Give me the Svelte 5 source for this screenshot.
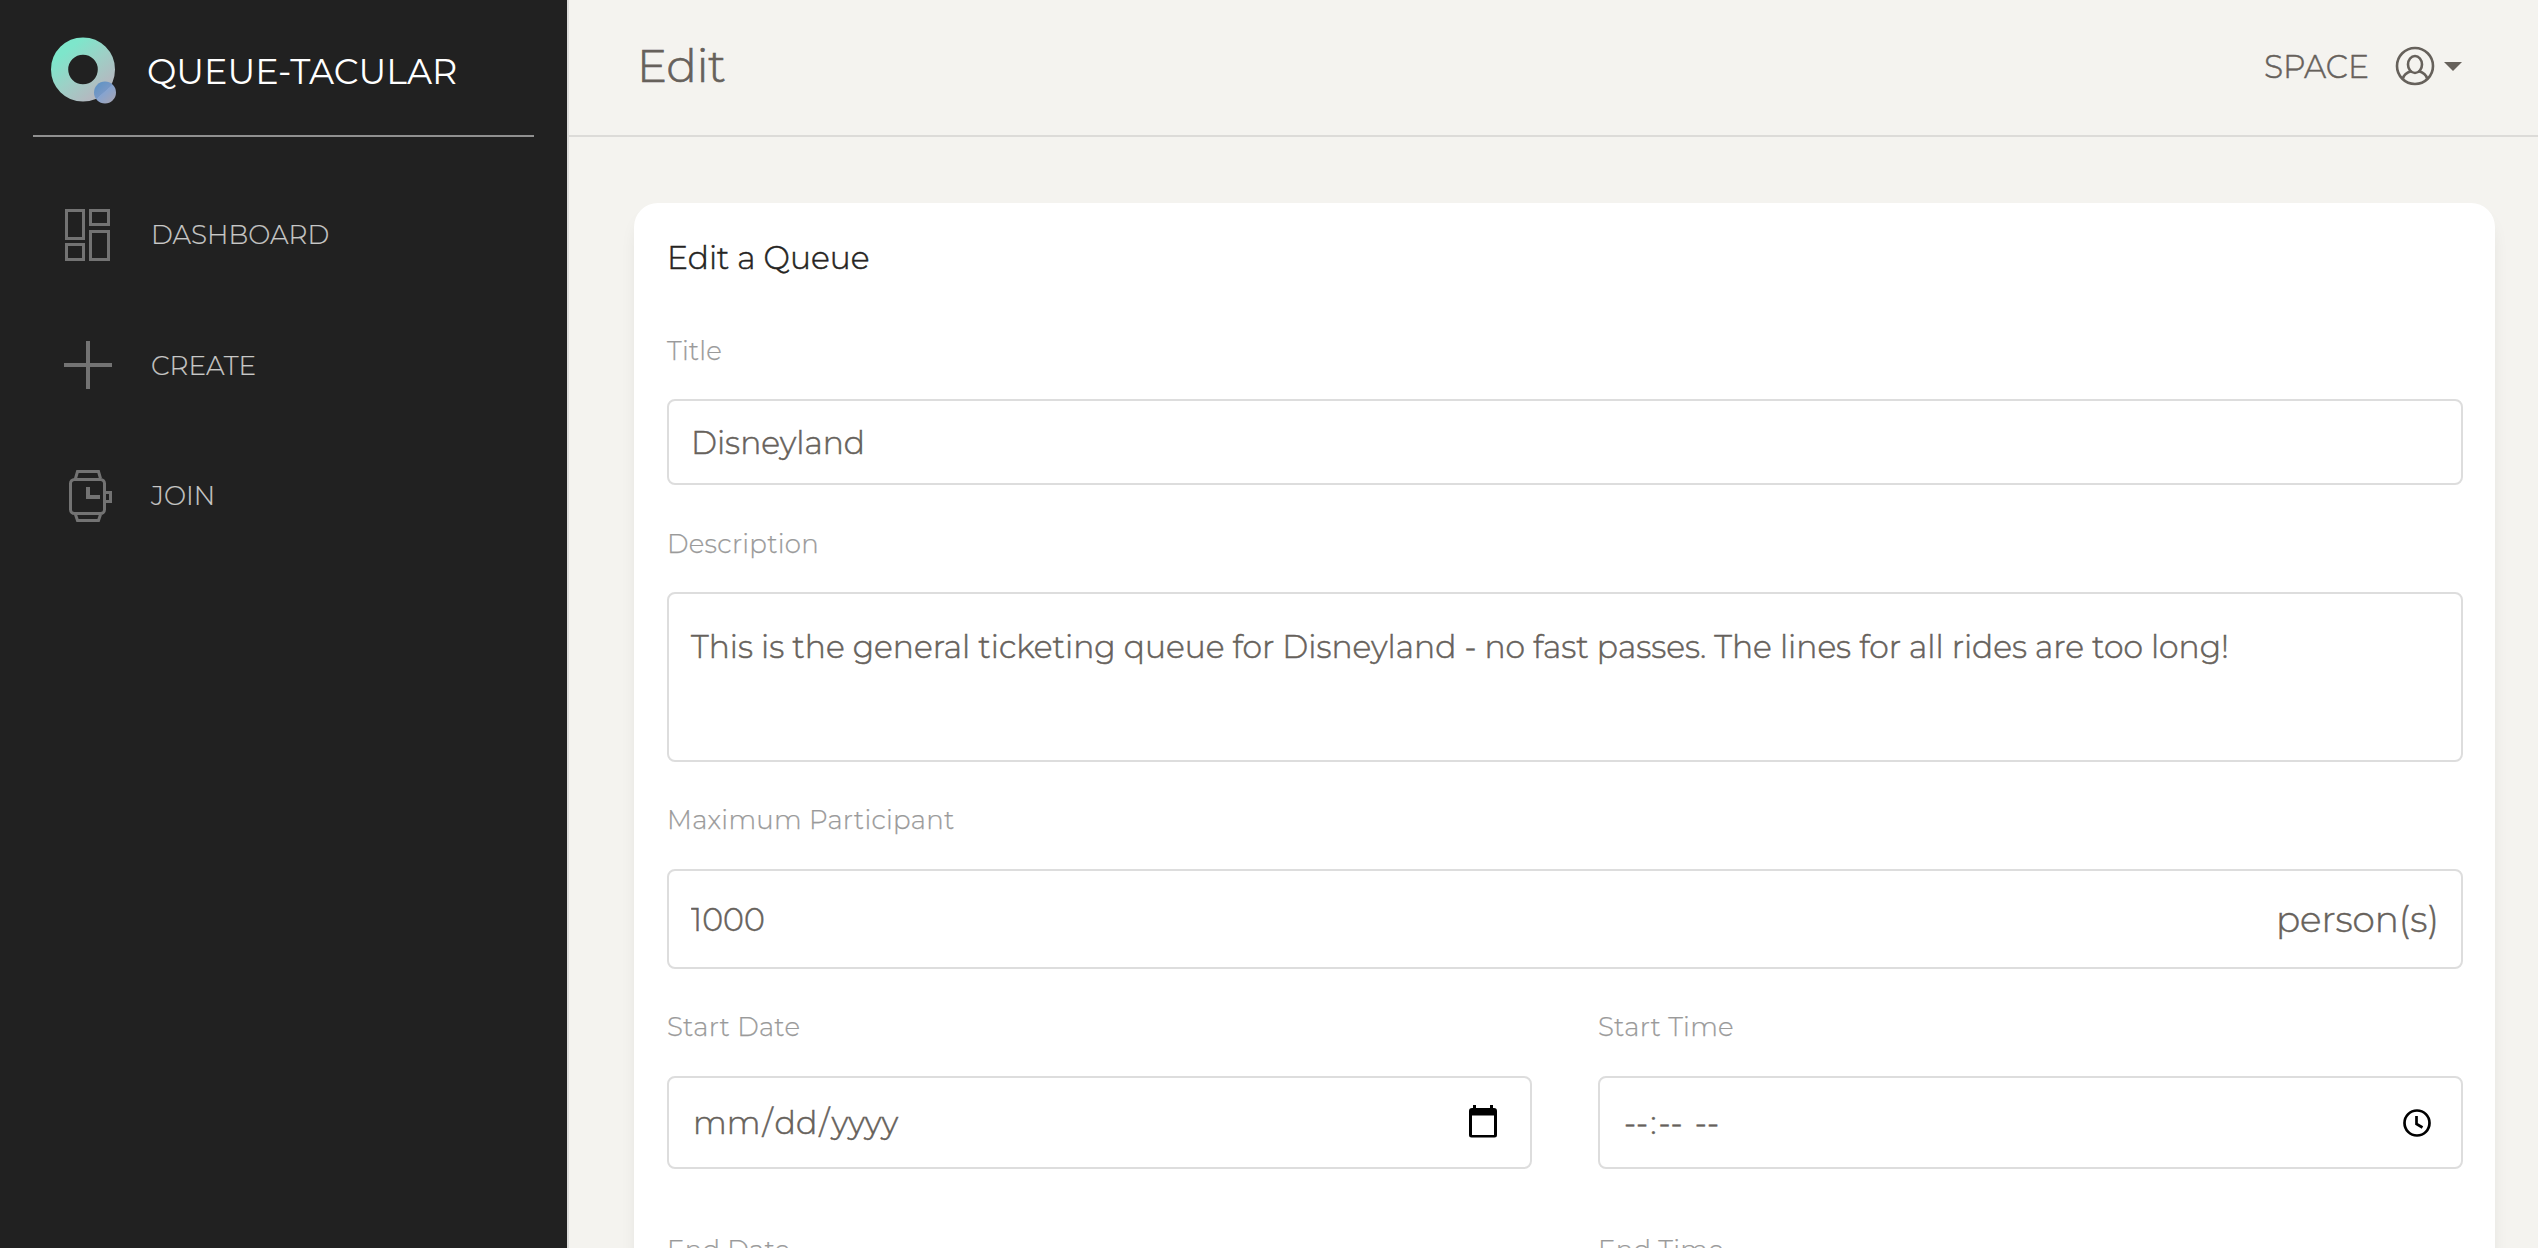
<script>
  const nav = ['DASHBOARD', 'CREATE', 'JOIN'];
  const rows = [
    ['Start Date', 'Start Time'],
    ['End Date', 'End Time'],
  ];
  let title = $state('Disneyland');
  let description = $state(
    'This is the general ticketing queue for Disneyland - no fast passes. The lines for all rides are too long!'
  );
  let maximum = $state('1000');
</script>

<div class="app">
  <aside>
    <div class="brand">
      <svg class="logo" viewBox="0 0 66 68">
        <defs>
          <linearGradient id="ring" x1="0.15" y1="0.1" x2="0.85" y2="0.95">
            <stop offset="0" stop-color="#7ee6cb" />
            <stop offset="0.5" stop-color="#9dd0c6" />
            <stop offset="1" stop-color="#b3b9c0" />
          </linearGradient>
          <linearGradient id="dot" x1="0.1" y1="0.1" x2="0.8" y2="0.9">
            <stop offset="0" stop-color="#5f93c4" />
            <stop offset="0.48" stop-color="#7798c6" />
            <stop offset="0.5" stop-color="#86a4d0" />
            <stop offset="1" stop-color="#a0a4b8" />
          </linearGradient>
        </defs>
        <circle cx="33" cy="31.500" r="23.4" fill="none" stroke="url(#ring)" stroke-width="17.2" />
        <circle cx="55" cy="54.500" r="11" fill="url(#dot)" />
      </svg>
      <span>QUEUE-TACULAR</span>
    </div>
    <nav>
      {#each nav as item}
        <a href="#{item.toLowerCase()}">
          <svg class="nav-icon" viewBox="0 0 48 56">
            {#if item === 'DASHBOARD'}
              <path d="M2.5 3.5h17v28h-17zM26.500 3.5h18v14h-18zM2.5 37.5h17v15h-17zM26.500 24.5h18v28h-18z" />
            {:else if item === 'CREATE'}
              <path class="bold" d="M24 3v48M0 27h48" />
            {:else}
              <rect x="6.5" y="11.5" width="34" height="34" rx="4" />
              <path d="M11.5 10.5l2-7h21l2 7M11.5 46.5l2 6h21l2-6M41 24.500h5.500v9H41" />
              <path class="bold" d="M24 19v10h12" />
            {/if}
          </svg>
          <span>{item}</span>
        </a>
      {/each}
    </nav>
  </aside>

  <main>
    <header>
      <h1>Edit</h1>
      <div class="user">
        <span>SPACE</span>
        <svg class="avatar" viewBox="0 0 40 40">
          <circle cx="20" cy="20" r="18" />
          <ellipse cx="20" cy="18.500" rx="7" ry="8.500" />
          <path d="M8 32.500c.7-4 4-6 8.500-7.500M32 32.500c-.7-4-4-6-8.500-7.500" />
        </svg>
        <i class="caret"></i>
      </div>
    </header>

    <section class="card">
      <h2>Edit a Queue</h2>
      <div class="field">
        <label for="title">Title</label>
        <input id="title" class="box title" bind:value={title} />
      </div>
      <div class="field spaced-after">
        <label for="description">Description</label>
        <textarea id="description" class="box" bind:value={description}></textarea>
      </div>
      <div class="field spaced">
        <label for="maximum">Maximum Participant</label>
        <div class="box group">
          <input id="maximum" bind:value={maximum} />
          <span>person(s)</span>
        </div>
      </div>
      {#each rows as [dateLabel, timeLabel]}
        <div class="row">
          <div class="field spaced">
            <span class="label">{dateLabel}</span>
            <div class="box picker">
              <div class="parts"><b>mm</b>/<b>dd</b>/<b>yyyy</b></div>
              <svg class="calendar" viewBox="0 0 28 33">
                <path d="M4 0h3v3h14V0h3v3h1a3 3 0 0 1 3 3v24a2.500 2.500 0 0 1-2.500 2.500h-23A2.500 2.500 0 0 1 0 30V6a3 3 0 0 1 3-3h1zM3 10.500V30h22V10.500z" fill-rule="evenodd" />
              </svg>
            </div>
          </div>
          <div class="field spaced">
            <span class="label">{timeLabel}</span>
            <div class="box picker">
              <div class="parts"><b>--</b>:<b>--</b>&nbsp;<b>--</b></div>
              <svg class="clock" viewBox="0 0 28 28">
                <circle cx="14" cy="14" r="12.500" />
                <path d="M13.500 7v8l6 3.500" />
              </svg>
            </div>
          </div>
        </div>
      {/each}
    </section>
  </main>
</div>

<style>
  :global(body) {
    overflow: hidden;
  }
  .app {
    display: flex;
    height: 1248px;
    overflow: hidden;
    background: #f4f3ef;
    color: #66615b;
    font: 300 31.38px/42px Montserrat, Inter, sans-serif;
    -webkit-text-stroke: 0.5px currentColor;
  }
  .app * {
    box-sizing: border-box;
  }
  aside {
    flex: none;
    width: 569px;
    padding: 0 33px;
    background: #212121;
    border-right: 2px solid #dcdcda;
    -webkit-text-stroke: 0.2px currentColor;
  }
  .brand {
    display: flex;
    align-items: center;
    height: 137px;
    padding: 8px 0 0 17px;
    border-bottom: 2px solid #909090;
    color: #fff;
    font-size: 35px;
    font-weight: 400;
    -webkit-text-stroke: 0;
  }
  .logo {
    width: 66px;
    height: 68px;
    margin-right: 31px;
    overflow: visible;
  }
  nav {
    padding-top: 33px;
  }
  nav a {
    display: flex;
    align-items: center;
    height: 130.5px;
    padding-left: 31px;
    color: #c8c8c7;
    font-size: 26.3px;
    text-decoration: none;
  }
  .nav-icon {
    width: 48px;
    height: 56px;
    margin-right: 39px;
    fill: none;
    stroke: #737373;
    stroke-width: 3;
  }
  .bold {
    stroke-width: 4;
  }
  main {
    flex: 1;
    min-width: 0;
  }
  header {
    display: flex;
    align-items: center;
    justify-content: space-between;
    height: 137px;
    padding: 0 76px 3px 68px;
    border-bottom: 2px solid #dcdbd8;
  }
  h1 {
    margin: 0;
    font-size: 44.8px;
    font-weight: 300;
    -webkit-text-stroke: 0.7px currentColor;
  }
  .user {
    display: flex;
    align-items: center;
  }
  .user span {
    padding-top: 2px;
  }
  .avatar {
    width: 40px;
    height: 40px;
    margin: 0 9px 0 26px;
    fill: none;
    stroke: #66615b;
    stroke-width: 2.6;
  }
  .caret {
    border: 9px solid transparent;
    border-top-color: #66615b;
    border-bottom: 0;
  }
  .card {
    height: 1300px;
    margin: 66px 43px 0 65px;
    padding: 35px 32px 0 33px;
    border-radius: 24px;
    background: #fff;
    box-shadow: 0 12px 20px -8px rgba(0, 0, 0, 0.15);
  }
  h2 {
    height: 40px;
    margin: 0 0 53px;
    color: #252422;
    font-size: 31.4px;
    font-weight: 300;
    line-height: 40px;
  }
  .field {
    display: flex;
    flex-direction: column;
    gap: 28px;
    margin-bottom: 39px;
  }
  .spaced,
  .spaced-after {
    margin-bottom: 38px;
  }
  .spaced {
    gap: 29px;
  }
  label,
  .label {
    height: 40px;
    color: #9a9a9a;
    font-size: 26px;
    line-height: 40px;
    letter-spacing: 0.28px;
    -webkit-text-stroke: 0.25px currentColor;
  }
  .box {
    width: 100%;
    border: 2px solid #dddddd;
    border-radius: 8px;
    background: #fff;
  }
  input,
  textarea {
    display: block;
    padding: 0 22px;
    color: #66615b;
    font: inherit;
    outline: 0;
    resize: none;
  }
  .title {
    height: 86px;
    padding-top: 1px;
    font-size: 31.4px;
  }
  textarea {
    height: 170px;
    padding-top: 32px;
    overflow: hidden;
  }
  .group {
    display: flex;
    align-items: center;
    height: 100px;
    padding-right: 22px;
    font-size: 35.8px;
  }
  .group input {
    flex: 1;
    padding-top: 1px;
    border: 0;
    font-size: 31.7px;
  }
  .row {
    display: grid;
    grid-template-columns: 1fr 1fr;
    gap: 66px;
    margin-bottom: 23px;
  }
  .picker {
    display: flex;
    align-items: center;
    justify-content: space-between;
    height: 93px;
    padding: 0 33px 0 22px;
    font-size: 31.7px;
  }
  b {
    padding: 0 2px;
    font-weight: 300;
  }
  .calendar {
    width: 28px;
    height: 33px;
    margin-top: -3px;
  }
  .clock {
    width: 28px;
    height: 28px;
    margin-right: -3px;
    fill: none;
    stroke: #000;
    stroke-width: 2.7;
  }
</style>
